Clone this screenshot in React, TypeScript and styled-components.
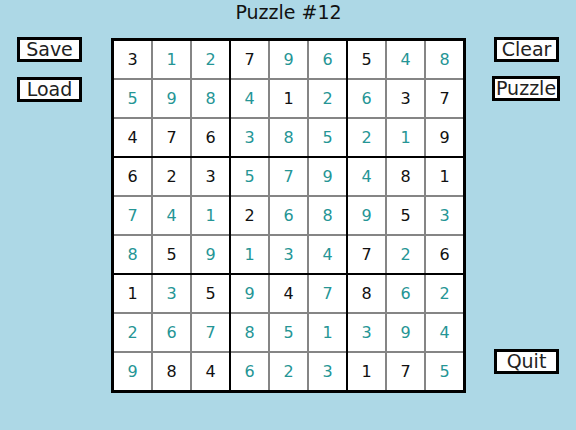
import React from "react";
import styled, { createGlobalStyle } from "styled-components";

const GlobalStyle = createGlobalStyle`
  html, body {
    margin: 0;
    padding: 0;
    background: #add8e6;
  }
  body {
    font-family: "DejaVu Sans", "Liberation Sans", sans-serif;
  }
`;

// digits of the board, and which ones were given (b) vs entered (t)
const DIGITS = [
  "312796548",
  "598412637",
  "476385219",
  "623579481",
  "741268953",
  "859134726",
  "135947862",
  "267851394",
  "984623175",
];
const KINDS = [
  "bttbttbtt",
  "ttttbttbb",
  "bbbtttttb",
  "bbbttttbb",
  "tttbtttbt",
  "tbttttbtb",
  "btbtbtbtt",
  "ttttttttt",
  "tbbtttbbt",
];

const Page = styled.div`
  width: 576px;
  height: 430px;
  display: flex;
  background: #add8e6;
`;

const Side = styled.div<{ $gap: number; $width: number; $padLeft: number }>`
  flex: 0 0 ${(p) => p.$width}px;
  display: flex;
  flex-direction: column;
  align-items: flex-start;
  gap: ${(p) => p.$gap}px;
  padding: 37px 0 56px ${(p) => p.$padLeft}px;
  box-sizing: border-box;
  height: 430px;
`;

const Spacer = styled.div`
  flex: 1;
`;

const Button = styled.button<{ $shift?: number }>`
  min-width: 65px;
  height: 25px;
  box-sizing: border-box;
  border: 3px solid #000;
  background: #fff;
  padding: 0 1px;
  margin: 0 0 0 ${(p) => p.$shift ?? 0}px;
  font-family: "DejaVu Sans", sans-serif;
  font-size: 19px;
  line-height: 19px;
  color: #222;
  cursor: pointer;
`;

const Center = styled.div`
  flex: 0 0 auto;
  display: flex;
  flex-direction: column;
  align-items: center;
`;

const Title = styled.div`
  height: 22px;
  line-height: 22px;
  padding-top: 1px;
  margin-bottom: 15px;
  font-size: 19px;
  color: #111;
`;

const Board = styled.div`
  display: grid;
  grid-template-columns: repeat(3, auto);
  gap: 2px;
  background: #000;
  border: 3px solid #000;
`;

const Block = styled.div`
  display: grid;
  grid-template-columns: repeat(3, 37px);
  grid-auto-rows: 37px;
  gap: 2px;
  background: #858585;
`;

const Cell = styled.div<{ $given: boolean }>`
  background: #fff;
  display: flex;
  align-items: center;
  justify-content: center;
  font-size: 16px;
  color: ${(p) => (p.$given ? "#111" : "#259595")};
`;

export default function App() {
  const blocks = [];
  for (let br = 0; br < 3; br++) {
    for (let bc = 0; bc < 3; bc++) {
      const cells = [];
      for (let r = br * 3; r < br * 3 + 3; r++) {
        for (let c = bc * 3; c < bc * 3 + 3; c++) {
          cells.push(
            <Cell key={`${r}-${c}`} $given={KINDS[r][c] === "b"}>
              {DIGITS[r][c]}
            </Cell>
          );
        }
      }
      blocks.push(<Block key={`${br}-${bc}`}>{cells}</Block>);
    }
  }

  return (
    <Page>
      <GlobalStyle />
      <Side $gap={15} $width={111} $padLeft={17}>
        <Button>Save</Button>
        <Button>Load</Button>
      </Side>
      <Center>
        <Title>Puzzle #12</Title>
        <Board>{blocks}</Board>
      </Center>
      <Side $gap={14} $width={110} $padLeft={26}>
        <Button $shift={2}>Clear</Button>
        <Button>Puzzle</Button>
        <Spacer />
        <Button $shift={2}>Quit</Button>
      </Side>
    </Page>
  );
}
